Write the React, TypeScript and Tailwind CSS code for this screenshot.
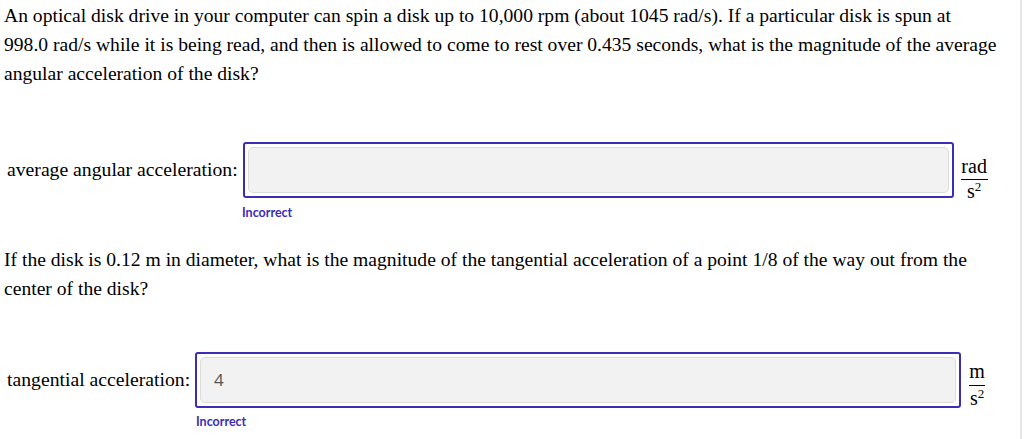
import React from "react";

function Sup2() {
  return <span className="relative -top-[7px] inline-block text-[13px] leading-none">2</span>;
}

function RadFraction() {
  return (
    <div className="ml-[7px] h-[56px] self-start">
      <div className="mt-[14px] flex w-[27px] flex-col items-center text-[20px]">
        <span className="whitespace-nowrap leading-[20px]">rad</span>
        <span className="mt-[3px] h-[1px] w-[27px] bg-black" />
        <span className="mt-[1px] whitespace-nowrap leading-[20px]">
          s<Sup2 />
        </span>
      </div>
    </div>
  );
}

function MFraction() {
  return (
    <div className="ml-[8px] h-[56px] self-start">
      <div className="mt-[9px] flex w-[16px] flex-col items-center text-[20px]">
        <span className="whitespace-nowrap leading-[20px]">m</span>
        <span className="mt-[4px] h-[1px] w-[16px] bg-black" />
        <span className="mt-[2px] whitespace-nowrap leading-[20px]">
          s<Sup2 />
        </span>
      </div>
    </div>
  );
}

function AnswerBox({ value, boxWidth }: { value: string; boxWidth: string }) {
  return (
    <div className={`${boxWidth} h-[56px] shrink-0 rounded-[3px] border-2 border-[#3c2db5] p-[3px]`}>
      <div className="flex h-full w-full items-center rounded-[5px] border border-[#dcdcdc] bg-[#f2f2f2] px-[13px] font-['Open_Sans',sans-serif] text-[17px] text-[#555]">
        {value}
      </div>
    </div>
  );
}

export default function App() {
  return (
    <div className="h-[439px] w-[1024px] overflow-hidden bg-white">
      <div className="h-full w-[1022px] border-r-2 border-[#e6e6e6] pl-[4px] pt-[1px] font-['Liberation_Serif','Times_New_Roman',serif] text-black">
        <p className="whitespace-nowrap text-[19.6px] leading-[29px]">
          An optical disk drive in your computer can spin a disk up to 10,000 rpm (about 1045 rad/s). If a particular disk is spun at
          <br />
          998.0 rad/s while it is being read, and then is allowed to come to rest over 0.435 seconds, what is the magnitude of the average
          <br />
          angular acceleration of the disk?
        </p>

        <div className="mt-[54px] flex items-center">
          <span className="mr-[5px] whitespace-nowrap pl-[3px] text-[19.7px]">average angular acceleration:</span>
          <AnswerBox value="" boxWidth="w-[711px]" />
          <RadFraction />
        </div>
        <div className="ml-[238px] mt-[7px] font-['Lato',sans-serif] text-[12.5px] font-bold leading-[16px] text-[#3c2db5]">
          Incorrect
        </div>

        <p className="mt-[24px] whitespace-nowrap text-[19.6px] leading-[29px]">
          If the disk is 0.12 m in diameter, what is the magnitude of the tangential acceleration of a point 1/8 of the way out from the
          <br />
          center of the disk?
        </p>

        <div className="mt-[49px] flex items-center">
          <span className="mr-[5px] whitespace-nowrap pl-[3px] text-[19.7px]">tangential acceleration:</span>
          <AnswerBox value="4" boxWidth="w-[766px]" />
          <MFraction />
        </div>
        <div className="ml-[192px] mt-[6px] font-['Lato',sans-serif] text-[12.5px] font-bold leading-[16px] text-[#3c2db5]">
          Incorrect
        </div>
      </div>
    </div>
  );
}
